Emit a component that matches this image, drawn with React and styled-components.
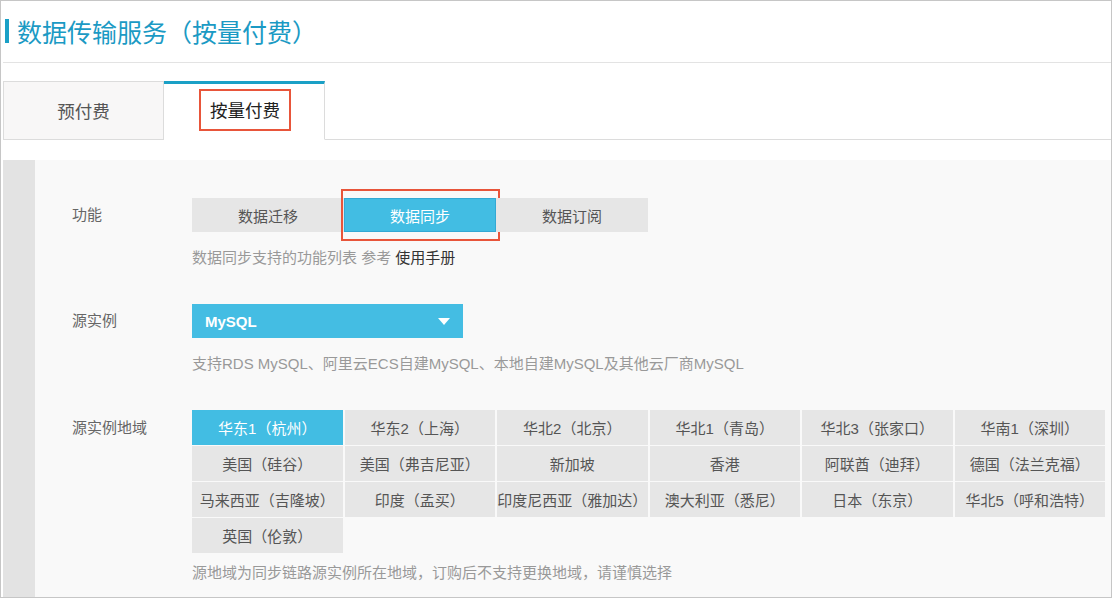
import React from 'react'
import styled, { createGlobalStyle } from 'styled-components'

const GlobalStyle = createGlobalStyle`
  html, body {
    margin: 0;
    padding: 0;
    background: #fff;
  }
  body {
    font-family: "Liberation Sans", "Noto Sans CJK SC", sans-serif;
    color: #333;
  }
`

const Frame = styled.div`
  box-sizing: border-box;
  width: 1112px;
  height: 598px;
  border: 1px solid #c6c6c6;
  padding-left: 2px;
  display: flex;
  flex-direction: column;
  overflow: hidden;
`

const Header = styled.div`
  height: 60px;
  border-bottom: 1px solid #e3e3e3;
  display: flex;
  align-items: center;
  gap: 8px;
  padding-left: 2px;
  padding-bottom: 1px;
  box-sizing: border-box;
  height: 62px;
`

const TitleBar = styled.span`
  width: 4px;
  height: 24px;
  background: #1aa0c6;
`

const Title = styled.h1`
  margin: 0;
  font-family: "Noto Sans CJK SC", sans-serif;
  font-size: 25px;
  font-weight: 400;
  color: #1b9ac4;
  line-height: 30px;
`

const Tabs = styled.div`
  margin-top: 18px;
  display: flex;
  border-bottom: 1px solid #dcdcdc;
  height: 58px;
`

const Tab = styled.div`
  box-sizing: border-box;
  width: 161px;
  height: 59px;
  display: flex;
  align-items: center;
  justify-content: center;
  font-size: 17.5px;
  color: ${p => (p.$active ? '#222' : '#555')};
  background: ${p => (p.$active ? '#fff' : '#f8f7f7')};
  border: 1px solid #dcdcdc;
  border-top: ${p => (p.$active ? '3px solid #1aa0c6' : '1px solid #dcdcdc')};
  border-bottom: ${p => (p.$active ? '1px solid #fff' : '1px solid #dcdcdc')};
  border-left: ${p => (p.$active ? 'none' : '1px solid #dcdcdc')};
  padding-bottom: ${p => (p.$active ? '4px' : '0')};
`

const Marked = styled.span`
  display: inline-flex;
  align-items: center;
  justify-content: center;
  box-sizing: border-box;
  width: 92px;
  height: 42px;
  border: 2px solid #e8553a;
  margin-left: 2px;
`

const Panel = styled.div`
  margin-top: 20px;
  flex: 1;
  display: flex;
  background: #f9f9f9;
`

const Strip = styled.div`
  width: 32px;
  background: #e3e3e3;
`

const Form = styled.div`
  flex: 1;
  padding: 38px 0 0 37px;
  display: flex;
  flex-direction: column;
`

const Row = styled.div`
  display: flex;
  margin-top: ${p => p.$gap || 0}px;
`

const Label = styled.div`
  width: 120px;
  height: ${p => p.$h || 34}px;
  line-height: ${p => p.$h || 34}px;
  font-size: 15px;
  color: #666;
`

const Control = styled.div`
  display: flex;
  flex-direction: column;
`

const Segments = styled.div`
  display: flex;
`

const Segment = styled.div`
  position: relative;
  box-sizing: border-box;
  width: 152px;
  height: 34px;
  display: flex;
  align-items: center;
  justify-content: center;
  font-size: 15px;
  background: ${p => (p.$active ? '#42bde3' : '#e6e6e6')};
  color: ${p => (p.$active ? '#fff' : '#555')};
  border: 1px solid ${p => (p.$active ? '#33a9d4' : '#e6e6e6')};

  ${p =>
    p.$marked &&
    `
    &::after {
      content: '';
      position: absolute;
      top: -10px;
      bottom: -10px;
      left: -4px;
      right: -5px;
      border: 2px solid #e8553a;
    }
  `}
`

const Hint = styled.div`
  margin-top: ${p => p.$gap || 16}px;
  font-size: 15px;
  line-height: 20px;
  color: #999;
`

const Link = styled.span`
  color: #333;
`

const Select = styled.div`
  box-sizing: border-box;
  width: 271px;
  height: 34px;
  background: #44bde3;
  color: #fff;
  display: flex;
  align-items: center;
  justify-content: space-between;
  padding: 0 13px;
  font-size: 15px;
  font-weight: 700;
`

const Caret = styled.span`
  width: 0;
  height: 0;
  border-left: 6px solid transparent;
  border-right: 6px solid transparent;
  border-top: 7px solid #fff;
`

const RegionGrid = styled.div`
  display: grid;
  grid-template-columns: repeat(6, 150.5px);
  grid-auto-rows: 35px;
  column-gap: 2px;
  row-gap: 1px;
`

const Region = styled.div`
  display: flex;
  align-items: center;
  justify-content: center;
  font-size: 15px;
  white-space: nowrap;
  background: ${p => (p.$active ? '#42bde3' : '#e6e6e6')};
  color: ${p => (p.$active ? '#fff' : '#555')};
`

const regions = [
  '华东1（杭州）',
  '华东2（上海）',
  '华北2（北京）',
  '华北1（青岛）',
  '华北3（张家口）',
  '华南1（深圳）',
  '美国（硅谷）',
  '美国（弗吉尼亚）',
  '新加坡',
  '香港',
  '阿联酋（迪拜）',
  '德国（法兰克福）',
  '马来西亚（吉隆坡）',
  '印度（孟买）',
  '印度尼西亚（雅加达）',
  '澳大利亚（悉尼）',
  '日本（东京）',
  '华北5（呼和浩特）',
  '英国（伦敦）',
]

export default function App() {
  return (
    <>
      <GlobalStyle />
      <Frame>
        <Header>
          <TitleBar />
          <Title>数据传输服务（按量付费）</Title>
        </Header>
        <Tabs>
          <Tab>预付费</Tab>
          <Tab $active>
            <Marked>按量付费</Marked>
          </Tab>
        </Tabs>
        <Panel>
          <Strip />
          <Form>
            <Row>
              <Label>功能</Label>
              <Control>
                <Segments>
                  <Segment>数据迁移</Segment>
                  <Segment $active $marked>
                    数据同步
                  </Segment>
                  <Segment>数据订阅</Segment>
                </Segments>
                <Hint>
                  数据同步支持的功能列表 参考 <Link>使用手册</Link>
                </Hint>
              </Control>
            </Row>
            <Row $gap={36}>
              <Label>源实例</Label>
              <Control>
                <Select>
                  MySQL
                  <Caret />
                </Select>
                <Hint>
                  支持RDS MySQL、阿里云ECS自建MySQL、本地自建MySQL及其他云厂商MySQL
                </Hint>
              </Control>
            </Row>
            <Row $gap={36}>
              <Label $h={35}>源实例地域</Label>
              <Control>
                <RegionGrid>
                  {regions.map((r, i) => (
                    <Region key={r} $active={i === 0}>
                      {r}
                    </Region>
                  ))}
                </RegionGrid>
                <Hint $gap={10}>
                  源地域为同步链路源实例所在地域，订购后不支持更换地域，请谨慎选择
                </Hint>
              </Control>
            </Row>
          </Form>
        </Panel>
      </Frame>
    </>
  )
}
